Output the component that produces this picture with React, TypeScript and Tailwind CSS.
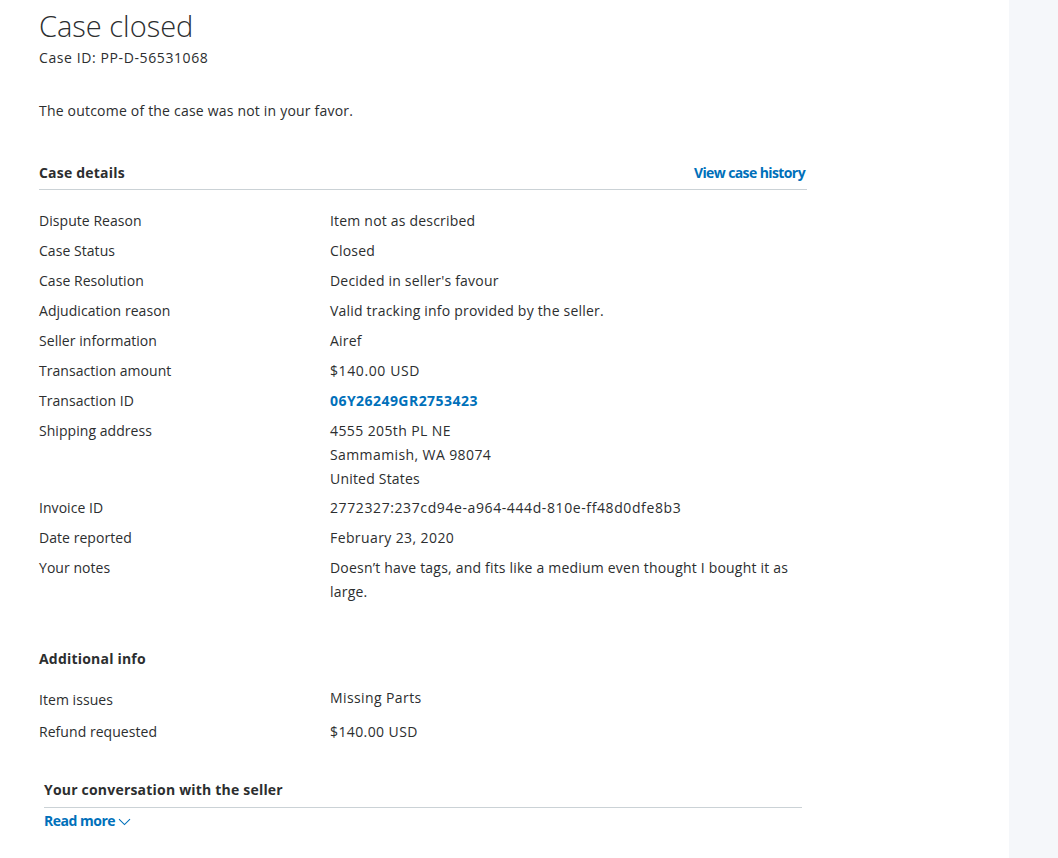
const DETAILS: { label: string; value: string[]; link?: boolean; digits?: boolean }[] = [
  { label: 'Dispute Reason', value: ['Item not as described'] },
  { label: 'Case Status', value: ['Closed'] },
  { label: 'Case Resolution', value: ["Decided in seller's favour"] },
  { label: 'Adjudication reason', value: ['Valid tracking info provided by the seller.'] },
  { label: 'Seller information', value: ['Airef'] },
  { label: 'Transaction amount', value: ['$140.00 USD'], digits: true },
  { label: 'Transaction ID', value: ['06Y26249GR2753423'], link: true },
  { label: 'Shipping address', value: ['4555 205th PL NE', 'Sammamish, WA 98074', 'United States'] },
  { label: 'Invoice ID', value: ['2772327:237cd94e-a964-444d-810e-ff48d0dfe8b3'], digits: true },
  { label: 'Date reported', value: ['February 23, 2020'] },
  {
    label: 'Your notes',
    value: ['Doesn\u2019t have tags, and fits like a medium even thought I bought it as large.'],
  },
];

const EXTRA = [
  { label: 'Item issues', value: 'Missing Parts' },
  { label: 'Refund requested', value: '$140.00 USD' },
];

function Chevron() {
  return (
    <svg width="13" height="8" viewBox="0 0 13 8" fill="none" className="mt-[2px]">
      <path d="M1 1.2 L6.5 6.6 L12 1.2" stroke="#0070ba" strokeWidth="1.1" />
    </svg>
  );
}

export default function App() {
  return (
    <div
      className="flex min-h-[858px] bg-white text-[14px] tracking-[0.2px] text-[#2c2e2f]"
      style={{ fontFamily: '"Open Sans", "Noto Sans", sans-serif' }}
    >
      <main className="flex-1 pl-[39px] pt-[6px]">
        <div className="w-[768px]">
          <h1 className="text-[29px] font-light leading-[40px] tracking-normal text-[#2c2e2f]">Case closed</h1>
          <p className="mt-[2px] leading-[20px] tracking-[0.6px]">Case ID: PP-D-56531068</p>
          <p className="mt-[33px] leading-[20px]">The outcome of the case was not in your favor.</p>

          {/* Case details */}
          <div className="mt-[41px] flex items-center justify-between border-b border-[#cbd2d6] pb-[6px]">
            <h2 className="font-bold leading-[20px]">Case details</h2>
            <a href="#" className="mr-[2px] font-bold tracking-[-0.6px] text-[#0070ba]">
              View case history
            </a>
          </div>

          <div className="mt-[19px] flex flex-col gap-[6px]">
            {DETAILS.map((row, i) => (
              <div key={row.label} className={`flex leading-[24px] ${i === 8 ? '-mt-[1px]' : ''}`}>
                <div className="w-[291px] shrink-0 tracking-[0.05px]">{row.label}</div>
                <div className={`flex-1 pr-[10px] ${row.digits ? 'tracking-[0.6px]' : ''}`}>
                  {row.value.map((v) =>
                    row.link ? (
                      <a key={v} href="#" className="font-bold tracking-[0.45px] text-[#0070ba]">
                        {v}
                      </a>
                    ) : (
                      <div key={v} className={/\d/.test(v) && !row.digits ? 'tracking-[0.4px]' : ''}>
                        {v}
                      </div>
                    ),
                  )}
                </div>
              </div>
            ))}
          </div>

          {/* Additional info */}
          <h2 className="mt-[43px] font-bold leading-[24px]">Additional info</h2>
          <div className="mt-[15px] flex flex-col gap-[8px]">
            {EXTRA.map((row, i) => (
              <div key={row.label} className="flex leading-[24px]">
                <div className={`w-[291px] shrink-0 tracking-[0.05px] ${i === 0 ? 'pt-[2px]' : ''}`}>
                  {row.label}
                </div>
                <div className="tracking-[0.4px]">{row.value}</div>
              </div>
            ))}
          </div>

          {/* Conversation */}
          <div className="mx-[5px] mt-[36px]">
            <div className="border-b border-[#cbd2d6] pb-[7px]">
              <h2 className="font-bold leading-[20px]">Your conversation with the seller</h2>
            </div>
            <a
              href="#"
              className="mt-[3px] inline-flex items-center gap-[3px] font-bold leading-[20px] tracking-[-0.5px] text-[#0070ba]"
            >
              Read more
              <Chevron />
            </a>
          </div>
        </div>
      </main>
      <aside className="w-[49px] shrink-0 bg-[#f5f7fa]" />
    </div>
  );
}
